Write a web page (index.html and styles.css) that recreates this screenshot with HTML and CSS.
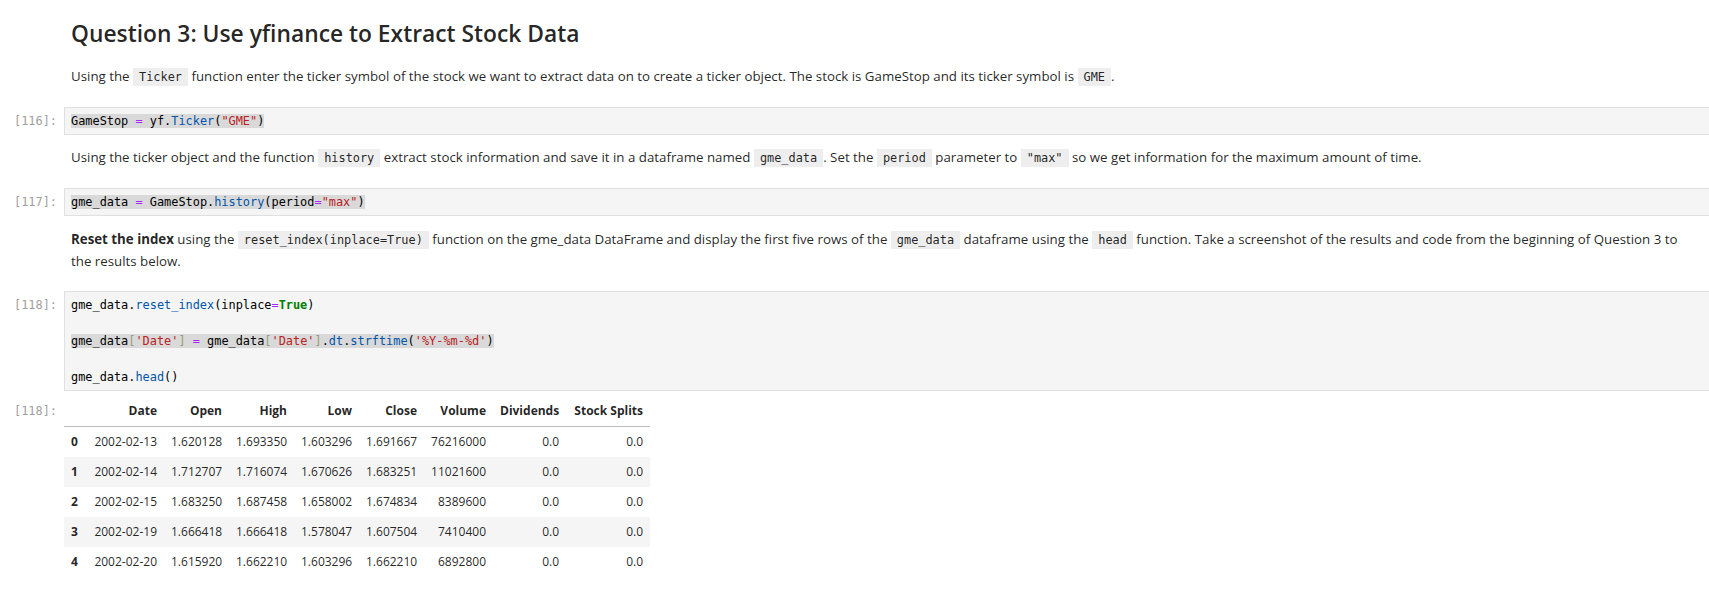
FILE: index.html
```html
<!DOCTYPE html>
<html lang="en">
<head>
<meta charset="utf-8">
<title>Question 3</title>
<link rel="stylesheet" href="styles.css">
</head>
<body>
<div class="notebook">
  <div class="cell md first">
    <div class="prompt"></div>
    <div class="md-body">
      <h2 class="title">Question 3: Use yfinance to Extract Stock Data</h2>
      <p>Using the <code>Ticker</code> function enter the ticker symbol of the stock we want to extract data on to create a ticker object. The stock is GameStop and its ticker symbol is <code>GME</code>.</p>
    </div>
  </div>

  <div class="cell code">
    <div class="prompt in">[116]:</div>
    <div class="editor"><pre><span class="hl">GameStop <span class="op">=</span> yf.<span class="prop">Ticker</span>(<span class="str">"GME"</span>)</span></pre></div>
  </div>

  <div class="cell md">
    <div class="prompt"></div>
    <div class="md-body">
      <p>Using the ticker object and the function <code>history</code> extract stock information and save it in a dataframe named <code>gme_data</code>. Set the <code>period</code> parameter to <code>"max"</code> so we get information for the maximum amount of time.</p>
    </div>
  </div>

  <div class="cell code">
    <div class="prompt in">[117]:</div>
    <div class="editor"><pre><span class="hl">gme_data <span class="op">=</span> GameStop.<span class="prop">history</span>(period<span class="op">=</span><span class="str">"max"</span>)</span></pre></div>
  </div>

  <div class="cell md">
    <div class="prompt"></div>
    <div class="md-body">
      <p><strong>Reset the index</strong> using the <code>reset_index(inplace=True)</code> function on the gme_data DataFrame and display the first five rows of the <code>gme_data</code> dataframe using the <code>head</code> function. Take a screenshot of the results and code from the beginning of Question 3 to the results below.</p>
    </div>
  </div>

  <div class="cell code">
    <div class="prompt in">[118]:</div>
    <div class="editor"><pre>gme_data.<span class="prop">reset_index</span>(inplace<span class="op">=</span><span class="kw">True</span>)

<span class="hl">gme_data<span class="br">[</span><span class="str">'Date'</span><span class="br">]</span> <span class="op">=</span> gme_data<span class="br">[</span><span class="str">'Date'</span><span class="br">]</span>.<span class="prop">dt</span>.<span class="prop">strftime</span>(<span class="str">'%Y-%m-%d'</span>)</span>

gme_data.<span class="prop">head</span>()</pre></div>
  </div>

  <div class="cell out">
    <div class="prompt outp">[118]:</div>
    <div class="output">
      <table class="df">
        <colgroup>
          <col class="c-idx"><col class="c-date"><col class="c-num"><col class="c-num"><col class="c-num"><col class="c-num"><col class="c-vol"><col class="c-div"><col class="c-split">
        </colgroup>
        <thead>
          <tr><th></th><th>Date</th><th>Open</th><th>High</th><th>Low</th><th>Close</th><th>Volume</th><th>Dividends</th><th>Stock Splits</th></tr>
        </thead>
        <tbody>
          <tr><th>0</th><td>2002-02-13</td><td>1.620128</td><td>1.693350</td><td>1.603296</td><td>1.691667</td><td>76216000</td><td>0.0</td><td>0.0</td></tr>
          <tr><th>1</th><td>2002-02-14</td><td>1.712707</td><td>1.716074</td><td>1.670626</td><td>1.683251</td><td>11021600</td><td>0.0</td><td>0.0</td></tr>
          <tr><th>2</th><td>2002-02-15</td><td>1.683250</td><td>1.687458</td><td>1.658002</td><td>1.674834</td><td>8389600</td><td>0.0</td><td>0.0</td></tr>
          <tr><th>3</th><td>2002-02-19</td><td>1.666418</td><td>1.666418</td><td>1.578047</td><td>1.607504</td><td>7410400</td><td>0.0</td><td>0.0</td></tr>
          <tr><th>4</th><td>2002-02-20</td><td>1.615920</td><td>1.662210</td><td>1.603296</td><td>1.662210</td><td>6892800</td><td>0.0</td><td>0.0</td></tr>
        </tbody>
      </table>
    </div>
  </div>
</div>
</body>
</html>
```

FILE: styles.css
```css
html, body {
  margin: 0;
  padding: 0;
  background: #ffffff;
}

body {
  font-family: "Open Sans", "Noto Sans", sans-serif;
  color: rgba(0, 0, 0, 0.87);
  overflow: hidden;
}

.cell {
  display: flex;
  align-items: flex-start;
}

.prompt {
  flex: 0 0 64px;
  box-sizing: border-box;
  padding-right: 7px;
  text-align: right;
  font-family: "DejaVu Sans Mono", monospace;
  font-size: 11.9px;
  color: #a0a0a0;
}

.prompt.in {
  padding-top: 5px;
  line-height: 18px;
}

.prompt.outp {
  line-height: 30px;
}

.md-body {
  flex: 1;
  min-width: 0;
  padding: 12.5px 24px 19px 7px;
  font-size: 13.3px;
  line-height: 21px;
}

.first .md-body {
  padding-top: 20px;
}

.title {
  margin: 0 0 17.5px;
  font-size: 22.8px;
  line-height: 28px;
  font-weight: 600;
  color: rgba(0, 0, 0, 0.87);
}

.md-body p {
  margin: 0;
}

.md-body strong {
  font-weight: 700;
}

.md-body code {
  font-family: "DejaVu Sans Mono", monospace;
  font-size: 11.9px;
  background: #eeeeee;
  padding: 2px 6px;
  color: rgba(0, 0, 0, 0.87);
}

.editor {
  flex: 1;
  min-width: 0;
  background: #f5f5f5;
  border: 1px solid #e0e0e0;
  border-right: 0;
  padding: 4px 0 4px 6px;
}

.editor pre {
  margin: 0;
  font-family: "DejaVu Sans Mono", monospace;
  font-size: 11.9px;
  line-height: 18px;
  color: #000000;
}

.hl { background: #d9d9d9; }
.op { color: #aa22ff; }
.prop { color: #0055aa; }
.str { color: #ba2121; }
.kw { color: #008000; font-weight: bold; }
.br { color: #999977; }

.out {
  padding-top: 5px;
}

.output {
  flex: 1;
}

.df {
  border-collapse: collapse;
  table-layout: fixed;
  width: 586px;
  font-size: 12px;
  color: rgba(0, 0, 0, 0.87);
}

.c-idx { width: 20px; }
.c-date { width: 80px; }
.c-num { width: 65px; }
.c-vol { width: 69px; }
.c-div { width: 73px; }
.c-split { width: 84px; }

.df th,
.df td {
  padding: 0 7px;
  height: 30px;
  text-align: right;
  vertical-align: middle;
  white-space: nowrap;
  font-weight: normal;
}

.df thead th {
  font-weight: bold;
  border-bottom: 1px solid #bdbdbd;
}

.df tbody th {
  font-weight: bold;
  text-align: left;
}

.df tbody tr:nth-child(even) {
  background: #f5f5f5;
}
```
